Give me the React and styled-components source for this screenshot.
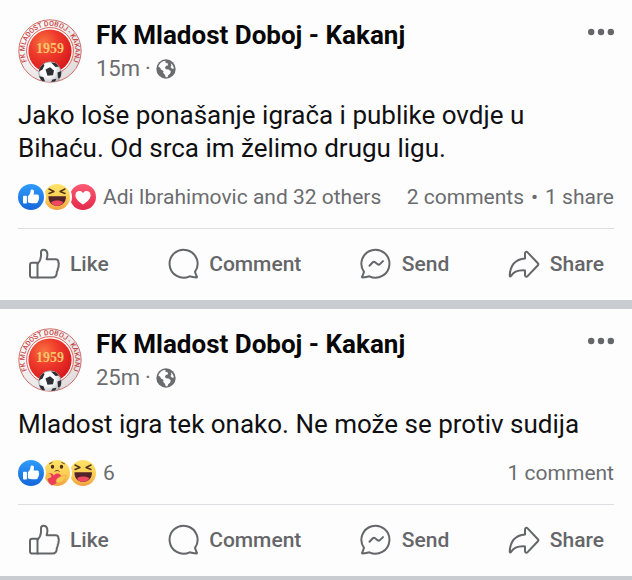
import React, { useId } from 'react'
import styled, { createGlobalStyle } from 'styled-components'

const posts = [
  {
    id: 1,
    time: '15m',
    message: 'Jako loše ponašanje igrača i publike ovdje u Bihaću. Od srca im želimo drugu ligu.',
    reactions: ['like', 'haha', 'love'],
    reactedBy: 'Adi Ibrahimovic and 32 others',
    stats: ['2 comments', '1 share'],
  },
  {
    id: 2,
    time: '25m',
    message: 'Mladost igra tek onako. Ne može se protiv sudija',
    reactions: ['like', 'care', 'haha'],
    reactedBy: '6',
    stats: ['1 comment'],
  },
]

function App() {
  return (
    <>
      <GlobalStyle />
      <Feed>
        {posts.map((post) => (
          <Post key={post.id} {...post} />
        ))}
      </Feed>
    </>
  )
}

export default App

function Post({ time, message, reactions, reactedBy, stats }) {
  return (
    <Card>
      <Header>
        <ClubBadge />
        <Details>
          <Name href="#">FK Mladost Doboj - Kakanj</Name>
          <Meta>
            {time} <span>·</span> <GlobeIcon />
          </Meta>
        </Details>
        <MoreButton aria-label="More options">
          <svg width="26" height="8" viewBox="0 0 26 8" fill="#656669">
            <circle cx="3.200" cy="4" r="3.200" />
            <circle cx="13" cy="4" r="3.200" />
            <circle cx="22.800" cy="4" r="3.200" />
          </svg>
        </MoreButton>
      </Header>
      <Message>{message}</Message>
      <Summary>
        <Reactions>
          {reactions.map((name, i) => (
            <Reaction key={name} $order={reactions.length - i}>
              <ReactionIcon name={name} />
            </Reaction>
          ))}
        </Reactions>
        <ReactedBy>{reactedBy}</ReactedBy>
        <Stats>
          {stats.map((stat, i) => (
            <React.Fragment key={stat}>
              {i > 0 && <span>•</span>}
              <span>{stat}</span>
            </React.Fragment>
          ))}
        </Stats>
      </Summary>
      <Actions>
        <Action><LikeIcon />Like</Action>
        <Action><CommentIcon />Comment</Action>
        <Action><SendIcon />Send</Action>
        <Action><ShareIcon />Share</Action>
      </Actions>
    </Card>
  )
}

function ClubBadge() {
  const id = useId()
  return (
    <svg width="64" height="64" viewBox="0 0 64 64" role="img" aria-label="FK Mladost Doboj - Kakanj">
      <defs>
        <radialGradient id={id + 'red'} cx="0.36" cy="0.3" r="0.75">
          <stop offset="0" stopColor="#f9733f" />
          <stop offset="0.45" stopColor="#ee3a2c" />
          <stop offset="1" stopColor="#d6161c" />
        </radialGradient>
        <linearGradient id={id + 'rim'} x1="0" y1="0" x2="1" y2="1">
          <stop offset="0" stopColor="#ffffff" />
          <stop offset="1" stopColor="#dcd8d9" />
        </linearGradient>
        <radialGradient id={id + 'ball'} cx="0.4" cy="0.35" r="0.7">
          <stop offset="0.4" stopColor="#ffffff" />
          <stop offset="1" stopColor="#b3b5ba" />
        </radialGradient>
        <clipPath id={id + 'rimClip'}>
          <circle cx="32" cy="32" r="31" />
        </clipPath>
        <clipPath id={id + 'ballClip'}>
          <circle cx="32" cy="54" r="11.2" />
        </clipPath>
        <path id={id + 'arc'} d="M13.500 49.200A25.200 25.200 0 1 1 50.500 49.200" />
      </defs>
      <circle cx="32" cy="32" r="31.200" fill={`url(#${id}rim)`} stroke="#c9605c" strokeWidth="0.900" />
      <circle cx="32" cy="32" r="23.400" fill="#fff" stroke="#d9514b" strokeWidth="0.900" />
      <circle cx="32" cy="32" r="21.600" fill={`url(#${id}red)`} />
      <BadgeRing>
        <textPath href={`#${id}arc`} startOffset="50%" textAnchor="middle">
          FK MLADOST DOBOJ - KAKANJ
        </textPath>
      </BadgeRing>
      <BadgeYear x="32" y="34" textAnchor="middle">1959</BadgeYear>
      <g clipPath={`url(#${id}rimClip)`}>
        <circle cx="32" cy="54" r="11.200" fill={`url(#${id}ball)`} stroke="#8d8b8f" strokeWidth="0.700" />
        <g clipPath={`url(#${id}ballClip)`} fill="#2c2e33">
          <path d="M27.500 50.500l4.500-2.200 4 3.200-1 4.700-5.500.600z" />
          <path d="M20.500 50l4.500-5.500 1.500 1.800-2 4.200-3.500 2z" />
          <path d="M33 43.500l5 .800 3 3.200-3.500.500z" />
          <path d="M39.500 53.500l4-1.500v6l-3.500 1.500z" />
          <path d="M21 57l4.500 1.200 1.500 4.300h-5z" />
          <path d="M34.500 60.500l4-.800-1.500 3.300h-4z" />
        </g>
      </g>
    </svg>
  )
}

function GlobeIcon() {
  return (
    <svg width="20" height="20" viewBox="0 0 20 20" role="img" aria-label="Public">
      <circle cx="10" cy="10" r="9.700" fill="#6b6c6f" />
      <path
        fill="#fdfdfd"
        d="M2.300 7.600c1-2.700 3-4.700 5.600-5.600l1.800.300-.300 1.500 2.200.500.600 1.900-2.300.900-.900 1.700.900 1.400 2.700.300 2.200 1.700-.600 2.300-2 1.700-.700 2-1.700.100-.9-2.500-1.700-1.700.300-2-2.500-1.500-.8-1.800z"
      />
      <path fill="#fdfdfd" d="M14.800 4.200c1.700 1.300 2.800 3.100 3.100 5.200l-1.900.300-1.500-1.700.9-1.400z" />
    </svg>
  )
}

function ReactionIcon({ name }) {
  const id = useId()
  return (
    <svg width="26" height="26" viewBox="0 0 26 26" role="img" aria-label={name}>
      <defs>
        <linearGradient id={id + 'blue'} x1="0" y1="0" x2="0" y2="1">
          <stop offset="0" stopColor="#2f9bfa" />
          <stop offset="1" stopColor="#1567dc" />
        </linearGradient>
        <linearGradient id={id + 'pink'} x1="0" y1="0" x2="0" y2="1">
          <stop offset="0" stopColor="#fb5a72" />
          <stop offset="1" stopColor="#e42a4b" />
        </linearGradient>
        <linearGradient id={id + 'yellow'} x1="0" y1="0" x2="0" y2="1">
          <stop offset="0" stopColor="#fde469" />
          <stop offset="0.6" stopColor="#fbcb52" />
          <stop offset="1" stopColor="#f0a044" />
        </linearGradient>
      </defs>
      {name === 'like' && (
        <>
          <circle cx="13" cy="13" r="13" fill={`url(#${id}blue)`} />
          <g fill="#fff">
            <rect x="5" y="11.800" width="3.900" height="7.800" rx="0.800" />
            <path d="M9.900 12.200c1.700-1.200 2.500-3 2.600-5.100 0-1 .6-1.700 1.500-1.700 1.600 0 2.200 1.400 2 2.800l-.4 2.300h3.700c1.300 0 2 1.200 1.400 2.200.6.700.6 1.600 0 2.300.3.800.1 1.600-.7 2.100.1 1.300-.6 2.100-1.900 2.100H14c-1.500 0-2.900-.3-4.100-.9z" />
          </g>
        </>
      )}
      {name === 'love' && (
        <>
          <circle cx="13" cy="13" r="13" fill={`url(#${id}pink)`} />
          <path fill="#fff" d="M13 20.500C9 17.800 5.400 14.900 5.400 11.200c0-4.400 5.500-5.600 7.600-2.100 2.100-3.500 7.600-2.300 7.600 2.100 0 3.700-3.600 6.600-7.600 9.300z" />
        </>
      )}
      {name === 'haha' && (
        <>
          <circle cx="13" cy="13" r="13" fill={`url(#${id}yellow)`} />
          <path d="M4.500 12.200h17.400c.3 5.400-3 9.600-8.700 9.600s-9-4.200-8.700-9.600z" fill="#53232a" />
          <path d="M7 18.400c2.800-2.500 9.600-2.500 12.400 0-1.500 2.300-3.500 3.400-6.200 3.400s-4.700-1.100-6.200-3.400z" fill="#f04860" />
          <path d="M5 5l5 2.500-5 2M21 5l-5 2.500 5 2" fill="none" stroke="#54361a" strokeWidth="1.400" strokeLinecap="round" strokeLinejoin="round" />
        </>
      )}
      {name === 'care' && (
        <>
          <circle cx="13" cy="13" r="13" fill={`url(#${id}yellow)`} />
          <ellipse cx="8.500" cy="6.800" rx="1.700" ry="2" fill="#4a3020" />
          <ellipse cx="17.500" cy="6.800" rx="1.700" ry="2" fill="#4a3020" />
          <path d="M5.500 3.800l2.500-1.300M17.800 2.500l2.700 1.300M11 11.200c1-1 3.200-1 4.200 0" fill="none" stroke="#6a441f" strokeWidth="1" strokeLinecap="round" />
          <path d="M7.500 25.500C4.500 22.500 1.500 18 3.600 14.600c1.500-2.300 5-1.800 6.200.9 1.900-3 6.800-2.600 7.300.8.700 4.300-5 7.700-9.600 9.200z" fill="#eb3f59" />
          <path d="M1 15.300c1.400-2.600 5.200-2.400 6.200 0 .600 1.700-.8 2.900-2.500 2.900L2.500 20C1.300 19 .500 17 1 15.300z" fill="#f9bd4c" />
          <path d="M22.500 15.500c-4-.2-9 1.800-10.200 4.400-.8 1.900.6 3.500 2.700 3.100 3-.5 6-3 7.500-7.500z" fill="#fac951" stroke="#e99b3b" strokeWidth="0.500" />
        </>
      )}
    </svg>
  )
}

function LikeIcon() {
  return (
    <ActionIcon viewBox="0 0 32 32">
      <path d="M9.500 14.700H4.200A2.200 2.200 0 0 0 2 16.900v10.500a2.200 2.200 0 0 0 2.200 2.200h5.300z" />
      <path d="M9.500 15.800C12 13.200 13 10.600 13 7.200V4.300c0-1.600 1-2.500 2.400-2.500 2.700 0 4 2.200 4 4.800 0 1.700-.3 3.100-.8 4.600h9c2 0 3.100 1.400 2.700 3.100.6.800.7 1.900.2 3 .2 1.300 0 2.400-.7 3.300.1 1.300-.2 2.300-1 3.200.1 3.700-1.300 5.800-4.500 5.800H9.500" />
    </ActionIcon>
  )
}

function CommentIcon() {
  return (
    <ActionIcon viewBox="0 0 32 32">
      <path d="M28 23.800A14 14 0 1 0 22.700 28.300c1.900.3 4 1.200 6.700 1.200.5 0 .7-.4.500-.8-.9-1.700-1.500-3.100-1.900-4.900z" />
    </ActionIcon>
  )
}

function SendIcon() {
  return (
    <ActionIcon viewBox="0 0 32 32">
      <path d="M4 23.800A14 14 0 1 1 9.300 28.300c-1.900.3-4 1.200-6.700 1.200-.5 0-.7-.4-.5-.8.900-1.700 1.500-3.100 1.900-4.900z" />
      <path d="M9.500 17.700l3.300-3.400c.7-.7 1.500-.7 2.300-.1l2.500 2c.8.600 1.600.6 2.300-.1l3.100-3" />
    </ActionIcon>
  )
}

function ShareIcon() {
  return (
    <ActionIcon viewBox="0 0 32 32">
      <path d="M17 10.500V5.600c0-1.700 1.500-2.300 2.600-1.200l10.300 10.900c.6.600.6 1.300 0 1.900L19.600 28.100c-1.100 1.100-2.600.5-2.600-1.200v-4.500C11 22 5.500 23.700 3 28c-.5.800-1.300.6-1.300-.4C2.200 17.500 7.500 11.300 17 10.500z" />
    </ActionIcon>
  )
}

const GlobalStyle = createGlobalStyle`
 *{
     box-sizing:border-box;
 }
 body{
     margin:0;
     background:#c9ccd0;
     font-family:Roboto, "Liberation Sans", sans-serif;
 }
 button{
     border:0;
     padding:0;
     background:none;
     font-family:inherit;
     cursor:pointer;
 }
 svg{
     display:block;
     flex:none;
 }
`
const Feed = styled.main`
 display:flex;
 flex-direction:column;
 gap:9px;
 padding-bottom:3px;
`
const Card = styled.article`
 display:flex;
 flex-direction:column;
 padding:19px 18px 0;
 background:#fdfdfd;
`
const Header = styled.header`
 display:flex;
 align-items:flex-start;
 gap:14px;
`
const Details = styled.div`
 flex:1;
`
const Name = styled.a`
 display:block;
 color:#080809;
 font-size:26px;
 font-weight:700;
 line-height:32px;
 text-decoration:none;
`
const Meta = styled.div`
 display:flex;
 align-items:center;
 gap:5px;
 margin-top:4px;
 color:#6b6c6f;
 font-size:22px;
 line-height:28px;
`
const MoreButton = styled.button`
 padding:9px 0;
`
const Message = styled.p`
 margin:16px 0 17px;
 padding-right:16px;
 color:#101012;
 font-size:26px;
 line-height:33px;
`
const Summary = styled.div`
 display:flex;
 align-items:center;
 height:29px;
 margin-bottom:17px;
 color:#6b6c6f;
 font-size:21px;
 line-height:28px;
 white-space:nowrap;
`
const Reactions = styled.div`
 display:flex;
`
const Reaction = styled.span`
 position:relative;
 z-index:${(props) => props.$order};
 border-radius:50%;
 box-shadow:0 0 0 2px #fdfdfd;
`
const ReactedBy = styled.span`
 margin-left:7px;
`
const Stats = styled.span`
 display:flex;
 gap:7px;
 margin-left:auto;
`
const Actions = styled.div`
 display:flex;
 justify-content:space-between;
 height:72px;
 padding:0 10px 2px;
 border-top:1px solid #dcdde0;
`
const Action = styled.button`
 display:flex;
 align-items:center;
 gap:10px;
 color:#656669;
 font-size:21px;
 font-weight:500;
`
const ActionIcon = styled.svg`
 width:32px;
 height:32px;
 fill:none;
 stroke:#656669;
 stroke-width:2;
 stroke-linecap:round;
 stroke-linejoin:round;
`
const BadgeRing = styled.text`
 fill:#c8433f;
 font-size:7px;
 font-weight:500;
`
const BadgeYear = styled.text`
 fill:#f9c66a;
 font-family:"Liberation Serif", serif;
 font-size:14px;
 font-weight:700;
`
